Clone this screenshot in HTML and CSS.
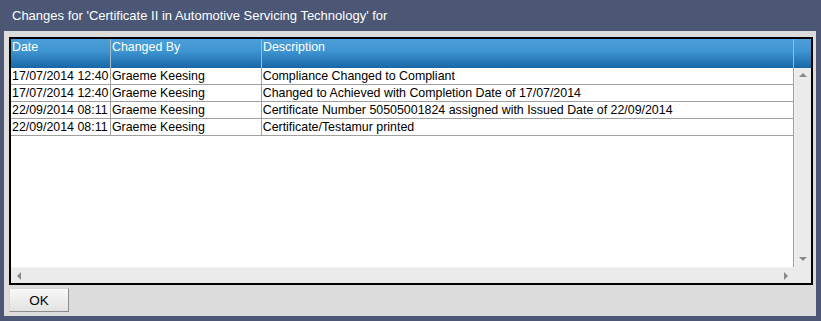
FILE: index.html
```html
<!DOCTYPE html>
<html lang="en">
  <head>
    <meta charset="UTF-8" />
    <title>Changes</title>
    <link rel="stylesheet" href="styles.css">
  </head>
  <body>
    <div class="titlebar">Changes for 'Certificate II in Automotive Servicing Technology' for</div>
    <div class="panel">
      <div class="grid">
        <div class="head">
          <div class="hcell c-date">Date</div>
          <div class="hcell c-by">Changed By</div>
          <div class="hcell c-desc">Description</div>
          <div class="hcell c-sb"></div>
        </div>
        <div class="body">
          <div class="rows">
            <div class="row">
              <div class="cell c-date">17/07/2014 12:40</div>
              <div class="cell c-by">Graeme Keesing</div>
              <div class="cell c-desc">Compliance Changed to Compliant</div>
            </div>
            <div class="row">
              <div class="cell c-date">17/07/2014 12:40</div>
              <div class="cell c-by">Graeme Keesing</div>
              <div class="cell c-desc">Changed to Achieved with Completion Date of 17/07/2014</div>
            </div>
            <div class="row">
              <div class="cell c-date">22/09/2014 08:11</div>
              <div class="cell c-by">Graeme Keesing</div>
              <div class="cell c-desc">Certificate Number 50505001824 assigned with Issued Date of 22/09/2014</div>
            </div>
            <div class="row">
              <div class="cell c-date">22/09/2014 08:11</div>
              <div class="cell c-by">Graeme Keesing</div>
              <div class="cell c-desc">Certificate/Testamur printed</div>
            </div>
          </div>
          <div class="vscroll">
            <span class="arrow up"></span>
            <span class="arrow down"></span>
          </div>
          <div class="hscroll">
            <span class="arrow left"></span>
            <span class="arrow right"></span>
          </div>
          <div class="corner"></div>
        </div>
      </div>
      <div class="actions">
        <button class="btn">OK</button>
      </div>
    </div>
  </body>
</html>
```

FILE: styles.css
```css
* {
  box-sizing: border-box;
  margin: 0;
  padding: 0;
}
html, body {
  width: 821px;
  height: 321px;
  overflow: hidden;
}
body {
  background: #4b5775;
  font-family: "Liberation Sans", Arial, sans-serif;
  font-size: 12.4px;
  color: #000;
}
.titlebar {
  height: 31px;
  padding: 8px 0 0 12px;
  color: #fff;
  font-size: 13px;
}
.panel {
  margin: 0 5px 0 4px;
  height: 285px;
  background: #dcdcdc;
  padding: 6px 3px 0 5px;
}
/* grid with black frame */
.grid {
  border: 2px solid #000;
  height: 248px;
  background: #fff;
  display: flex;
  flex-direction: column;
}
.head {
  display: flex;
  height: 29px;
  background: linear-gradient(#4c9fd8, #4096d2 40%, #1866a6);
  color: #fff;
}
.hcell {
  padding: 1px 0 0 1px;
  border-right: 1px solid #a8b8c8;
}
.c-date { width: 100px; }
.c-by { width: 151px; }
.c-desc { width: 532px; }
.hcell.c-sb {
  flex: 1;
  border-right: none;
}
.body {
  flex: 1;
  display: grid;
  grid-template-columns: 783px 17px;
  grid-template-rows: 1fr 16px;
}
.rows {
  border-right: 1px solid #a0a0a0;
  width: 783px;
}
.row {
  display: flex;
  height: 17px;
  border-bottom: 1px solid #a0a0a0;
}
.cell {
  padding: 1px 0 0 1px;
  border-right: 1px solid #a0a0a0;
  white-space: nowrap;
  overflow: hidden;
  line-height: 15px;
}
.row .c-desc {
  border-right: none;
}
.vscroll, .hscroll, .corner {
  background: #ebebeb;
  position: relative;
}
.vscroll {
  border-left: 1px solid #f2f2f2;
}
.hscroll {
  border-top: 1px solid #f2f2f2;
}
.arrow {
  position: absolute;
  width: 0;
  height: 0;
  border: 4px solid transparent;
}
.arrow.up {
  top: 5px;
  left: 4px;
  border-bottom-color: #8a8a8a;
  border-top: none;
}
.arrow.down {
  bottom: 6px;
  left: 4px;
  border-top-color: #8a8a8a;
  border-bottom: none;
}
.arrow.left {
  top: 4px;
  left: 6px;
  border-right-color: #8a8a8a;
  border-left: none;
}
.arrow.right {
  top: 4px;
  right: 6px;
  border-left-color: #8a8a8a;
  border-right: none;
}
.actions {
  padding-top: 3px;
}
.btn {
  width: 60px;
  height: 24px;
  font-family: "Liberation Sans", Arial, sans-serif;
  font-size: 13.5px;
  background: linear-gradient(#f8f8f8, #e2e2e2);
  border: 1px solid #8c8c8c;
  border-top-color: #d8d8d8;
  border-left-color: #d8d8d8;
  color: #000;
}
```
